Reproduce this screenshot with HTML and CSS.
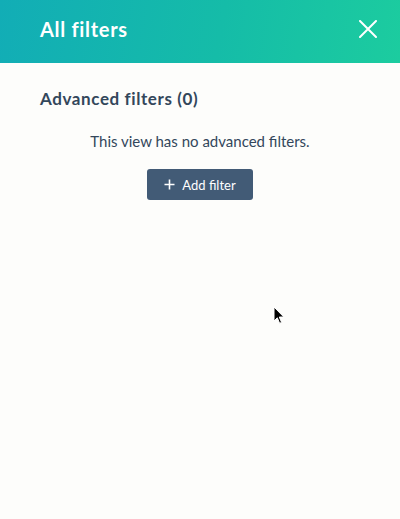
FILE: index.html
```html
<!DOCTYPE html>
<html lang="en">
<head>
  <meta charset="UTF-8" />
  <title>All filters</title>
  <link rel="stylesheet" href="styles.css">
</head>
<body>

<div class="panel">
  <header class="panel-header">
    <h1>All filters</h1>
    <button class="close" aria-label="Close">
      <svg width="18" height="18" viewBox="0 0 18 18"><path d="M1 1L17 17M17 1L1 17" stroke="#fff" stroke-width="2" stroke-linecap="round"/></svg>
    </button>
  </header>

  <section class="panel-body">
    <h2>Advanced filters (0)</h2>
    <p class="empty">This view has no advanced filters.</p>
    <div class="actions">
      <button class="add-filter">
        <svg width="11" height="11" viewBox="0 0 11 11"><path d="M5.5 0.5V10.5M0.5 5.5H10.5" stroke="#fff" stroke-width="1.6"/></svg>
        Add filter
      </button>
    </div>
  </section>

  <svg class="cursor" width="12" height="19" viewBox="0 0 12 19"><path d="M1 1V15L4.3 11.8L6.6 17.3L8.6 16.4L6.3 11H10.8Z" fill="#000" stroke="#fff" stroke-width="1"/></svg>
</div>

</body>
</html>
```

FILE: styles.css
```css
body {
  margin: 0;
  font-family: 'Lato', 'Open Sans', sans-serif;
  background: #fdfdfb;
  color: #33475b;
}

.panel {
  position: relative;
  height: 519px;
}

.panel-header {
  height: 63px;
  box-sizing: border-box;
  background: linear-gradient(100deg, #12adb6 0%, #15bca8 55%, #1ccc9f 100%);
  display: flex;
  align-items: center;
  justify-content: space-between;
  padding: 0 22px 5px 40px;
}

.panel-header h1 {
  margin: 0;
  color: #fff;
  font-size: 20px;
  font-weight: 700;
  letter-spacing: 0.7px;
}

.close {
  background: none;
  border: 0;
  padding: 0;
  width: 20px;
  height: 20px;
  display: flex;
  align-items: center;
  justify-content: center;
  cursor: pointer;
}

.panel-body {
  padding: 25px 40px;
}

.panel-body h2 {
  margin: 0;
  font-size: 17px;
  font-weight: 700;
  letter-spacing: 0.6px;
}

.empty {
  margin: 23px 0 0;
  text-align: center;
  font-size: 15px;
}

.actions {
  display: flex;
  justify-content: center;
  margin-top: 19px;
}

.add-filter {
  display: flex;
  align-items: center;
  gap: 7px;
  height: 31px;
  padding: 0 17px;
  background: #425b76;
  color: #fff;
  border: 0;
  border-radius: 3px;
  font-family: inherit;
  font-size: 13px;
  cursor: pointer;
}

.cursor {
  position: absolute;
  left: 273px;
  top: 306px;
}
```
